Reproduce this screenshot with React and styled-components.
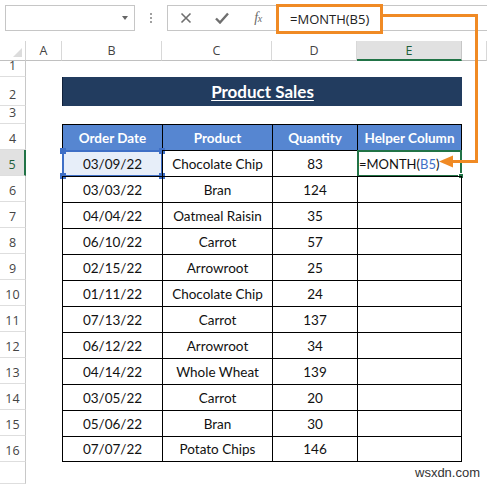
import React from 'react';
import styled, { createGlobalStyle, css } from 'styled-components';

const GlobalStyle = createGlobalStyle`
  html, body { margin: 0; padding: 0; background: #fff; }
  body { font-family: Lato, "Noto Sans", sans-serif; }
  * { box-sizing: border-box; }
`;

const ORANGE = '#f08a24';
const GREEN = '#217346';
const BLUE_REF = '#3f6fc6';

const Screen = styled.div`
  position: relative;
  width: 487px;
  height: 484px;
  overflow: hidden;
  background: #fff;
  display: flex;
  flex-direction: column;
`;

const FormulaBar = styled.div`
  height: 41px;
  flex: none;
  display: flex;
  align-items: flex-start;
  padding: 5px 0 0 5px;
`;

const NameBox = styled.div`
  width: 130px;
  height: 26px;
  border: 1px solid #c6c6c6;
  display: flex;
  align-items: center;
  justify-content: flex-end;
  padding-right: 6px;
`;

const DropArrow = styled.span`
  width: 0;
  height: 0;
  border-left: 3.5px solid transparent;
  border-right: 3.5px solid transparent;
  border-top: 4px solid #666;
`;

const Grip = styled.div`
  width: 32px;
  height: 26px;
  display: flex;
  flex-direction: column;
  align-items: center;
  justify-content: center;
  gap: 2px;
`;

const GripDot = styled.span`
  width: 2px;
  height: 2px;
  background: #a0a0a0;
`;

const FormulaBox = styled.div`
  flex: 1;
  margin-right: -5px;
  height: 26px;
  border: 1px solid #c6c6c6;
  display: flex;
  align-items: flex-start;
`;

const IconSlot = styled.div`
  width: 36px;
  height: 24px;
  display: flex;
  align-items: center;
  justify-content: center;
  color: #6f6f6f;
`;

const FxLabel = styled.span`
  font-family: "Liberation Serif", serif;
  font-style: italic;
  font-size: 14px;
  color: #6a6a6a;
  letter-spacing: -0.5px;
  & sub { font-size: 10px; vertical-align: baseline; }
`;

const FormulaInput = styled.div`
  width: 107px;
  height: 30px;
  margin-top: -2px;
  border: 3px solid ${ORANGE};
  display: flex;
  align-items: center;
  padding-left: 11px;
  font-family: "Open Sans", "Noto Sans", sans-serif;
  font-size: 13px;
  color: #222;
  background: #fff;
`;

const Sheet = styled.div`
  flex: 1;
  display: grid;
  grid-template-columns: 26px 36px 100px 110px 85px 105px 1fr;
  grid-template-rows: 20px 16px 29px 18px 26px repeat(12, 26px) 1fr;
`;

const at = css`
  grid-column: ${(p) => p.$col} / span ${(p) => p.$span || 1};
  grid-row: ${(p) => p.$row};
`;

const Corner = styled.div`
  ${at};
  position: relative;
  border-right: 1px solid #d4d4d4;
  border-bottom: 1px solid #c0c0c0;
  &::after {
    content: '';
    position: absolute;
    right: 3px;
    bottom: 3px;
    border-left: 9px solid transparent;
    border-bottom: 9px solid #dcdcdc;
  }
`;

const ColHeader = styled.div`
  ${at};
  display: flex;
  align-items: center;
  justify-content: center;
  font-family: "Open Sans", "Noto Sans", sans-serif;
  font-size: 12.5px;
  color: #444;
  border-right: 1px solid #d8d8d8;
  border-bottom: 1px solid #c0c0c0;
  ${(p) =>
    p.$active &&
    css`
      background: #e1e1e1;
      color: #1d5e3a;
      border-bottom: 2px solid ${GREEN};
      border-right-color: #c6c6c6;
    `}
`;

const RowHeader = styled.div`
  ${at};
  display: flex;
  align-items: flex-end;
  justify-content: center;
  padding-bottom: 3px;
  font-family: "Open Sans", "Noto Sans", sans-serif;
  font-size: 12.5px;
  line-height: 15px;
  color: #444;
  border-right: 1px solid #c8c8c8;
  border-bottom: 1px solid #dedede;
  ${(p) =>
    p.$active &&
    css`
      background: #e1e1e1;
      color: #1d5e3a;
      border-right: 2px solid ${GREEN};
    `}
`;

const TitleBar = styled.div`
  ${at};
  background: #223c5f;
  border-left: 1px solid #10203a;
  display: flex;
  align-items: center;
  justify-content: center;
  color: #fff;
  font-weight: 700;
  font-size: 17px;
  text-decoration: underline;
  text-underline-offset: 2px;
`;

const TableCell = styled.div`
  ${at};
  position: relative;
  display: flex;
  align-items: center;
  justify-content: ${(p) => (p.$left ? 'flex-start' : 'center')};
  padding-left: ${(p) => (p.$left ? '1px' : '0')};
  font-size: ${(p) => (p.$left ? '13px' : '13.5px')};
  color: #111;
  border-left: 1px solid #000;
  border-top: 1px solid #000;
  ${(p) => p.$last && css`border-right: 1px solid #000;`}
  ${(p) => p.$bottom && css`border-bottom: 1px solid #000;`}
  ${(p) =>
    p.$head &&
    css`
      background: #5686d1;
      color: #fff;
      font-weight: 700;
    `}
  ${(p) => p.$ref && css`background: #e7eef9;`}
`;

const Frame = styled.div`
  position: absolute;
  top: -1px;
  left: -1px;
  right: -1px;
  bottom: -1px;
  border: 2px solid ${(p) => p.$color};
  pointer-events: none;
`;

const Handle = styled.span`
  position: absolute;
  width: 6px;
  height: 6px;
  background: ${(p) => p.$color};
  ${(p) => (p.$v === 'top' ? 'top: -4px;' : 'bottom: -4px;')}
  ${(p) => (p.$h === 'left' ? 'left: -4px;' : 'right: -4px;')}
  ${(p) => p.$outline && css`border: 1px solid #fff;`}
`;

const RefText = styled.span`
  color: ${BLUE_REF};
`;

const Watermark = styled.div`
  position: absolute;
  left: 415px;
  top: 465px;
  font-family: "Liberation Sans", Arial, sans-serif;
  font-size: 13px;
  color: #333;
`;

const Connector = styled.svg`
  position: absolute;
  left: 0;
  top: 0;
  pointer-events: none;
`;

const rows = [
  ['03/09/22', 'Chocolate Chip', '83'],
  ['03/03/22', 'Bran', '124'],
  ['04/04/22', 'Oatmeal Raisin', '35'],
  ['06/10/22', 'Carrot', '57'],
  ['02/15/22', 'Arrowroot', '25'],
  ['01/11/22', 'Chocolate Chip', '24'],
  ['07/13/22', 'Carrot', '137'],
  ['06/12/22', 'Arrowroot', '34'],
  ['04/14/22', 'Whole Wheat', '139'],
  ['03/05/22', 'Carrot', '20'],
  ['05/06/22', 'Bran', '30'],
  ['07/07/22', 'Potato Chips', '146'],
];

const colLetters = ['A', 'B', 'C', 'D', 'E', ''];
const headers = ['Order Date', 'Product', 'Quantity', 'Helper Column'];

export default function App() {
  return (
    <>
      <GlobalStyle />
      <Screen>
        <FormulaBar>
          <NameBox>
            <DropArrow />
          </NameBox>
          <Grip>
            <GripDot />
            <GripDot />
            <GripDot />
          </Grip>
          <FormulaBox>
            <IconSlot>
              <svg width="12" height="12" viewBox="0 0 12 12">
                <path d="M1.5 1.5 L10.5 10.5 M10.5 1.5 L1.5 10.5" stroke="#6f6f6f" strokeWidth="1.6" fill="none" />
              </svg>
            </IconSlot>
            <IconSlot>
              <svg width="14" height="12" viewBox="0 0 14 12">
                <path d="M1 6.5 L5 10.5 L13 1.5" stroke="#6f6f6f" strokeWidth="2.4" fill="none" />
              </svg>
            </IconSlot>
            <IconSlot>
              <FxLabel>
                f<sub>x</sub>
              </FxLabel>
            </IconSlot>
            <FormulaInput>=MONTH(B5)</FormulaInput>
          </FormulaBox>
        </FormulaBar>

        <Sheet>
          <Corner $col={1} $row={1} />
          {colLetters.map((l, i) => (
            <ColHeader key={i} $col={i + 2} $row={1} $active={l === 'E'}>
              {l}
            </ColHeader>
          ))}
          {Array.from({ length: 17 }, (_, i) => (
            <RowHeader key={i} $col={1} $row={i + 2} $active={i + 1 === 5}>
              {i < 16 ? i + 1 : ''}
            </RowHeader>
          ))}

          <TitleBar $col={3} $span={4} $row={3}>
            Product Sales
          </TitleBar>

          {headers.map((h, i) => (
            <TableCell key={h} $col={i + 3} $row={5} $head $last={i === 3}>
              {h}
            </TableCell>
          ))}

          {rows.map((r, ri) => {
            const row = ri + 6;
            const bottom = ri === rows.length - 1;
            const first = ri === 0;
            return (
              <React.Fragment key={ri}>
                <TableCell $col={3} $row={row} $bottom={bottom} $ref={first}>
                  {r[0]}
                  {first && (
                    <Frame $color={BLUE_REF}>
                      <Handle $color={BLUE_REF} $v="top" $h="left" />
                      <Handle $color={BLUE_REF} $v="top" $h="right" />
                      <Handle $color={BLUE_REF} $v="bottom" $h="left" />
                      <Handle $color={BLUE_REF} $v="bottom" $h="right" />
                    </Frame>
                  )}
                </TableCell>
                <TableCell $col={4} $row={row} $bottom={bottom}>
                  {r[1]}
                </TableCell>
                <TableCell $col={5} $row={row} $bottom={bottom}>
                  {r[2]}
                </TableCell>
                <TableCell $col={6} $row={row} $bottom={bottom} $last $left={first}>
                  {first && (
                    <>
                      =MONTH(<RefText>B5</RefText>)
                      <Frame $color={GREEN}>
                        <Handle $color={GREEN} $v="bottom" $h="right" $outline />
                      </Frame>
                    </>
                  )}
                </TableCell>
              </React.Fragment>
            );
          })}
        </Sheet>

        <Connector width="487" height="484" viewBox="0 0 487 484">
          <path
            d="M383 15.5 H476.5 V161.5 H451"
            stroke={ORANGE}
            strokeWidth="3"
            fill="none"
          />
          <path d="M439 161.5 L453 155.5 L453 167.5 Z" fill={ORANGE} />
        </Connector>

        <Watermark>wsxdn.com</Watermark>
      </Screen>
    </>
  );
}
